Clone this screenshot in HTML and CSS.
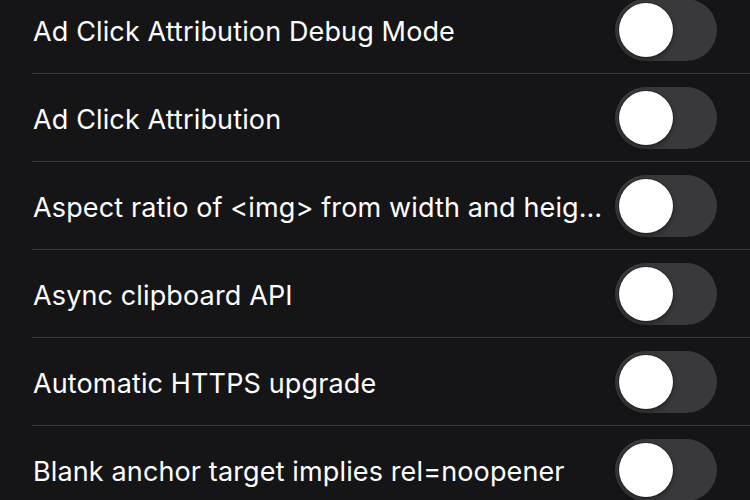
FILE: index.html
```html
<!DOCTYPE html>
<html>
<head>
<meta charset="utf-8">
<link rel="stylesheet" href="styles.css">
</head>
<body>
<div class="list">
  <div class="row"><span class="label">Ad Click Attribution Debug Mode</span><span class="toggle"><span class="knob"></span></span></div>
  <div class="row"><span class="label">Ad Click Attribution</span><span class="toggle"><span class="knob"></span></span></div>
  <div class="row"><span class="label">Aspect ratio of &lt;img&gt; from width and heig…</span><span class="toggle"><span class="knob"></span></span></div>
  <div class="row"><span class="label">Async clipboard API</span><span class="toggle"><span class="knob"></span></span></div>
  <div class="row"><span class="label">Automatic HTTPS upgrade</span><span class="toggle"><span class="knob"></span></span></div>
  <div class="row"><span class="label">Blank anchor target implies rel=noopener</span><span class="toggle"><span class="knob"></span></span></div>
</div>
</body>
</html>
```

FILE: styles.css
```css
html, body {
  margin: 0;
  padding: 0;
  background: #151517;
  height: 100%;
  overflow: hidden;
}
.list {
  margin-top: -14px;
  font-family: Inter, "Noto Sans", sans-serif;
  color: #ffffff;
}
.row {
  height: 87px;
  margin-left: 32px;
  padding-left: 1px;
  padding-right: 33px;
  border-bottom: 1px solid #3a3a3c;
  display: flex;
  align-items: center;
  gap: 4px;
}
.label {
  flex: 1;
  min-width: 0;
  font-size: 27px;
  letter-spacing: 0.13px;
  white-space: nowrap;
  overflow: hidden;
  padding-top: 4px;
}
.toggle {
  flex: none;
  width: 102px;
  height: 62px;
  border-radius: 31px;
  background: #39393c;
  display: flex;
  align-items: center;
  padding-left: 4px;
  box-sizing: border-box;
}
.knob {
  width: 54px;
  height: 54px;
  border-radius: 50%;
  background: #ffffff;
  box-shadow: 0 0 0 1px rgba(0,0,0,0.25), 0 3px 6px rgba(0,0,0,0.35);
}
```
